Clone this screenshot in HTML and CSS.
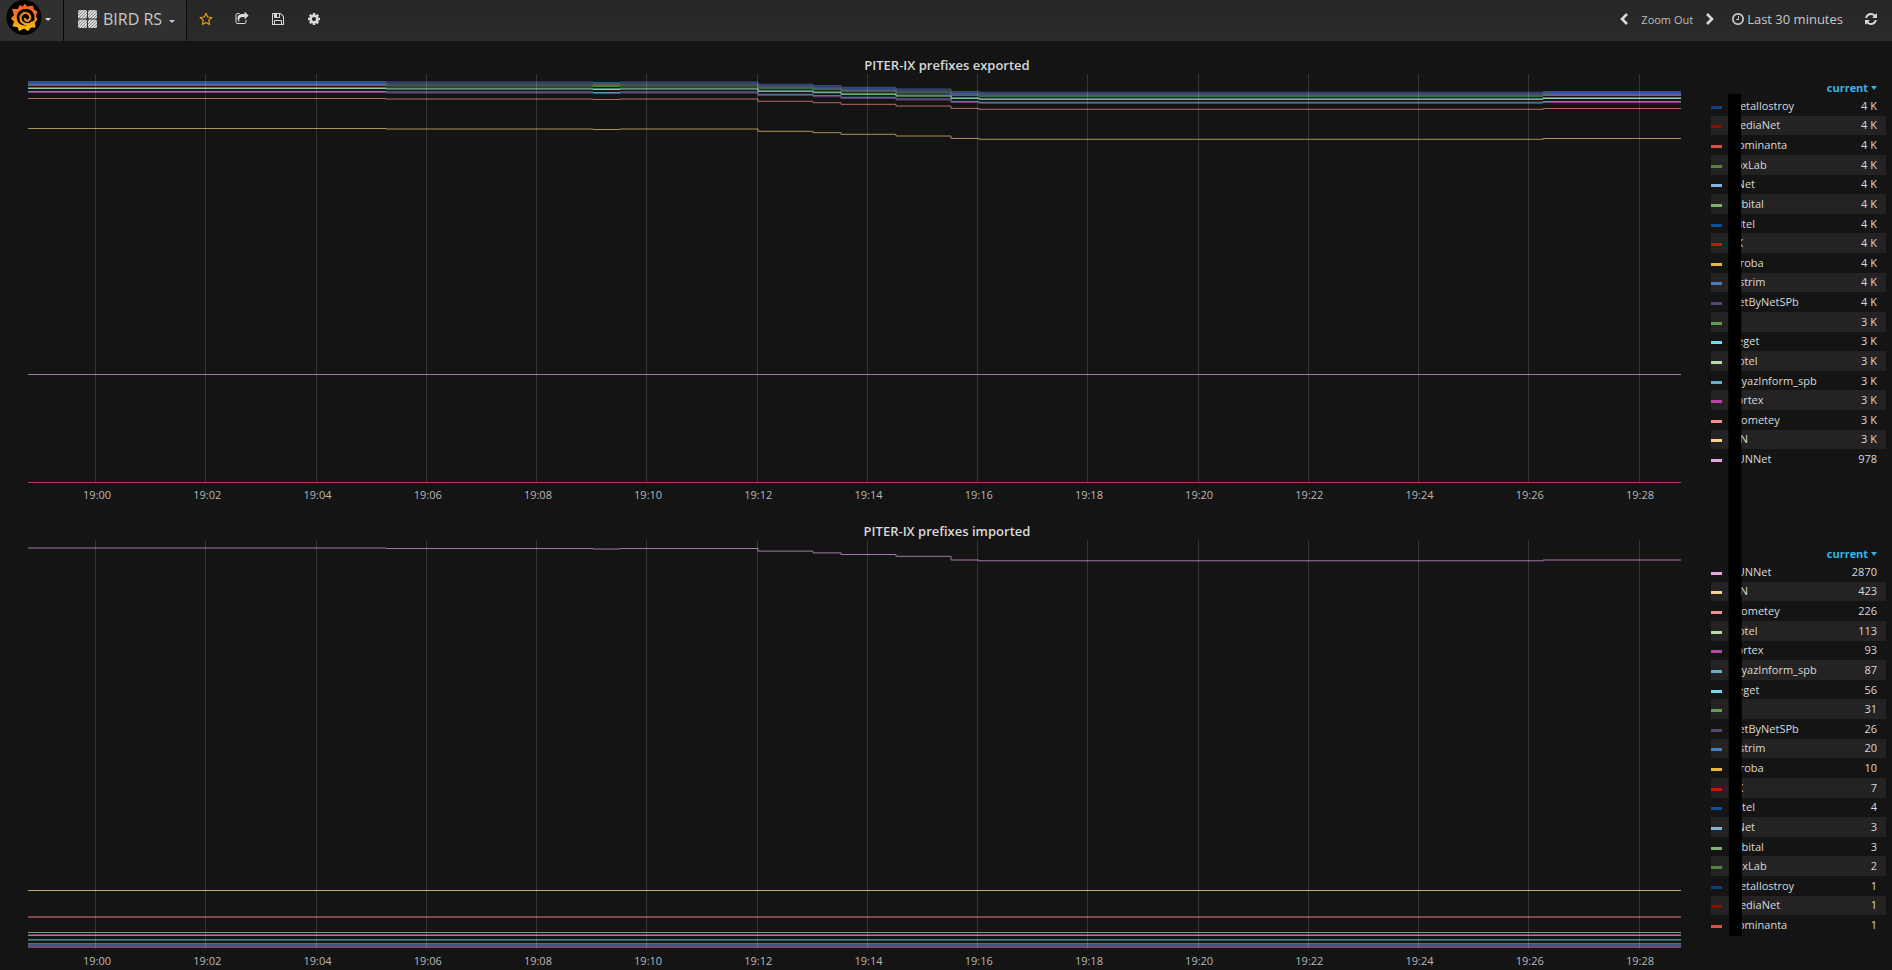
FILE: index.html
```html
<!DOCTYPE html>
<html lang="en">

<head>
    <meta charset="UTF-8">
    <meta name="viewport" content="width=device-width, initial-scale=1.0">
    <title>Grafana - BIRD RS</title>
    <link rel="stylesheet" href="styles.css">
</head>

<body>
    <nav class="navbar">
        <a href="#" class="brand" aria-label="Grafana menu">
            <svg class="logo" viewBox="0 0 36 36">
                <defs>
                    <linearGradient id="flame" x1="0" y1="0" x2="0" y2="1">
                        <stop offset="0" stop-color="#f05a28" />
                        <stop offset="0.45" stop-color="#f47b20" />
                        <stop offset="1" stop-color="#fdc911" />
                    </linearGradient>
                    <linearGradient id="curl" gradientUnits="userSpaceOnUse" x1="0" y1="4" x2="0" y2="31">
                        <stop offset="0" stop-color="#f05a28" />
                        <stop offset="0.5" stop-color="#f68a1f" />
                        <stop offset="1" stop-color="#fdc911" />
                    </linearGradient>
                </defs>
                <circle cx="18" cy="17.5" r="17.5" fill="#000" />
                <path fill="url(#flame)" d="M18.500 3.500L21.500 6.500L27 5.500L28 9.500L31.500 11.500L29.800 16L31.500 19.500L29 22.500L29.500 27.500L25 27.500L22 31L18 28.500L13 31L11.500 27L6.500 26.500L8 21.500L5 18.500L8 15L6 9L11.500 9L14 5L17 6.500Z" />
                <path fill="#000" d="M28.500 18C28.500 10.500 23 8.500 19 9C13.500 9.500 10.500 13.500 10.800 18C11 22.500 14.500 25.500 18.500 25.500C21 25.500 23.500 24.500 25 22.500L28.500 20Z" />
                <path fill="none" stroke="url(#curl)" stroke-width="2.200" stroke-linecap="round" d="M26 22.500C22 26 15 24 14.500 18.500C14.200 14.500 17.500 12.500 20.500 13C24 13.500 25.300 17.500 23.300 19.800C21.800 21.500 19 20.800 18.900 18.800" />
            </svg>
            <span class="caret"></span>
        </a>
        <a href="#" class="dash-picker">
            <svg class="grid-icon" viewBox="0 0 19 18">
                <defs>
                    <pattern id="hatch" width="3" height="3" patternUnits="userSpaceOnUse">
                        <rect width="3" height="3" fill="#d8d8d8" />
                        <path d="M-1 1L1 -1M0 3L3 0M2 4L4 2" stroke="#858585" stroke-width="0.900" />
                    </pattern>
                </defs>
                <g fill="url(#hatch)">
                    <rect width="9" height="8.500" rx="1.500" />
                    <rect x="10" width="9" height="8.500" rx="1.500" />
                    <rect y="9.500" width="9" height="8.500" rx="1.500" />
                    <rect x="10" y="9.500" width="9" height="8.500" rx="1.500" />
                </g>
            </svg>
            <span>BIRD RS</span>
            <span class="caret low"></span>
        </a>
        <div class="actions">
            <button class="star" aria-label="Mark as favorite">
                <svg viewBox="0 0 14 14"><path fill="none" stroke="currentColor" stroke-width="1.200" stroke-linejoin="round" d="M7 1.300L8.700 5L12.800 5.500L9.800 8.300L10.600 12.500L7 10.500L3.400 12.500L4.200 8.300L1.200 5.500L5.300 5Z" /></svg>
            </button>
            <button aria-label="Share dashboard">
                <svg viewBox="0 0 1792 1792"><path d="M1472 989v259q0 119-84.500 203.500t-203.500 84.500h-832q-119 0-203.500-84.500t-84.500-203.500v-832q0-119 84.500-203.500t203.500-84.500h255q13 0 22.500 9.500t9.500 22.500q0 27-26 32-77 26-133 60-10 4-16 4h-112q-66 0-113 47t-47 113v832q0 66 47 113t113 47h832q66 0 113-47t47-113v-214q0-19 18-29 28-13 54-37 16-16 35-8 21 9 21 31zm237-496l-384 384q-18 19-45 19-12 0-25-5-39-17-39-59v-192h-160q-323 0-438 131-119 137-74 473 3 23-20 34-8 2-12 2-16 0-26-13-10-14-21-31t-39.500-68.500-49.500-99.500-38.500-114-17.500-122q0-49 3.500-91t14-90 28-88 47-81.500 68.500-74 94.500-61.500 124.500-48.500 159.500-30.500 196.500-11h160v-192q0-42 39-59 13-5 25-5 26 0 45 19l384 384q19 19 19 45t-19 45z" /></svg>
            </button>
            <button aria-label="Save dashboard">
                <svg viewBox="0 0 1792 1792"><path d="M512 1536h768v-384h-768v384zm896 0h128v-896q0-14-10-38.500t-20-34.500l-281-281q-10-10-34-20t-39-10v416q0 40-28 68t-68 28h-576q-40 0-68-28t-28-68v-416h-128v1280h128v-416q0-40 28-68t68-28h832q40 0 68 28t28 68v416zm-384-928v-320q0-13-9.500-22.500t-22.500-9.500h-192q-13 0-22.500 9.500t-9.500 22.500v320q0 13 9.500 22.500t22.500 9.500h192q13 0 22.500-9.500t9.500-22.500zm640 32v928q0 40-28 68t-68 28h-1344q-40 0-68-28t-28-68v-1344q0-40 28-68t68-28h928q40 0 88 20t76 48l280 280q28 28 48 76t20 88z" /></svg>
            </button>
            <button aria-label="Settings">
                <svg viewBox="0 0 1792 1792"><path d="M1152 896q0-106-75-181t-181-75-181 75-75 181 75 181 181 75 181-75 75-181zm512-109v222q0 12-8 23t-20 13l-185 28q-19 54-39 91 35 50 107 138 10 12 10 25t-9 23q-27 37-99 108t-94 71q-12 0-26-9l-138-108q-44 23-91 38-16 136-29 186-7 28-36 28h-222q-14 0-24.500-8.500t-11.500-21.500l-28-184q-49-16-90-37l-141 107q-10 9-25 9-14 0-25-11-126-114-165-168-7-10-7-23 0-12 8-23 15-21 51-66.500t54-70.500q-27-50-41-99l-183-27q-13-2-21-12.500t-8-23.500v-222q0-12 8-23t19-13l186-28q14-46 39-92-40-57-107-138-10-12-10-24 0-10 9-23 26-36 98.500-107.500t94.500-71.500q13 0 26 10l138 107q44-23 91-38 16-136 29-186 7-28 36-28h222q14 0 24.500 8.500t11.500 21.500l28 184q49 16 90 37l142-107q9-9 24-9 13 0 25 10 129 119 165 170 7 8 7 22 0 12-8 23-15 21-51 66.500t-54 70.500q26 50 41 98l183 28q13 2 21 12.500t8 23.500z" /></svg>
            </button>
        </div>
        <div class="time-nav">
            <button aria-label="Back in time">
                <svg class="chevron" viewBox="0 0 8 12"><path fill="none" stroke="currentColor" stroke-width="2.600" d="M7 1L2 6L7 11" /></svg>
            </button>
            <button class="zoom-out">Zoom Out</button>
            <button aria-label="Forward in time">
                <svg class="chevron" viewBox="0 0 8 12"><path fill="none" stroke="currentColor" stroke-width="2.600" d="M1 1L6 6L1 11" /></svg>
            </button>
            <button class="range">
                <svg viewBox="0 0 1792 1792"><path d="M1024 544v448q0 14-9 23t-23 9h-320q-14 0-23-9t-9-23v-64q0-14 9-23t23-9h224v-352q0-14 9-23t23-9h64q14 0 23 9t9 23zm416 352q0-148-73-273t-198-198-273-73-273 73-198 198-73 273 73 273 198 198 273 73 273-73 198-198 73-273zm224 0q0 209-103 385.500t-279.500 279.500-385.500 103-385.500-103-279.500-279.500-103-385.500 103-385.500 279.500-279.500 385.500-103 385.500 103 279.500 279.500 103 385.500z" /></svg>
                Last 30 minutes
            </button>
            <button aria-label="Refresh">
                <svg viewBox="0 0 1792 1792"><path d="M1639 1056q0 5-1 7-64 268-268 434.500t-478 166.500q-146 0-282.500-55t-243.500-157l-129 129q-19 19-45 19t-45-19-19-45v-448q0-26 19-45t45-19h448q26 0 45 19t19 45-19 45l-137 137q71 66 161 102t187 36q134 0 250-65t186-179q11-17 53-117 8-23 30-23h192q13 0 22.500 9.500t9.500 22.500zm25-800v448q0 26-19 45t-45 19h-448q-26 0-45-19t-19-45 19-45l138-138q-148-137-349-137-134 0-250 65t-186 179q-11 17-53 117-8 23-30 23h-199q-13 0-22.500-9.500t-9.500-22.500v-7q65-268 270-434.500t480-166.500q146 0 284 55.500t245 156.500l130-129q19-19 45-19t45 19 19 45z" /></svg>
            </button>
        </div>
    </nav>

    <main class="dashboard">
        <section class="panel" id="exported">
            <h2>PITER-IX prefixes exported</h2>
            <div class="panel-body">
                <div class="graph">
                    <svg class="plot" viewBox="0 0 1653 409" preserveAspectRatio="none"></svg>
                    <div class="ticks"></div>
                </div>
                <table class="legend">
                    <thead>
                        <tr><th colspan="3"><button>current <span class="caret"></span></button></th></tr>
                    </thead>
                    <tbody></tbody>
                </table>
            </div>
        </section>

        <section class="panel" id="imported">
            <h2>PITER-IX prefixes imported</h2>
            <div class="panel-body">
                <div class="graph">
                    <svg class="plot" viewBox="0 0 1653 409" preserveAspectRatio="none"></svg>
                    <div class="ticks"></div>
                </div>
                <table class="legend">
                    <thead>
                        <tr><th colspan="3"><button>current <span class="caret"></span></button></th></tr>
                    </thead>
                    <tbody></tbody>
                </table>
            </div>
        </section>
        <div class="mask"></div>
    </main>

    <script src="main.js"></script>
</body>

</html>
```
FILE: styles.css
```css
* {
    margin: 0;
    box-sizing: border-box;
}

body {
    background-color: #141414;
    color: #d8d9da;
    font-family: "Open Sans", "Noto Sans", sans-serif;
    font-size: 11px;
}

button {
    padding: 0;
    border: none;
    background: none;
    color: inherit;
    font: inherit;
    cursor: pointer;
}

a {
    color: inherit;
    text-decoration: none;
}

svg {
    display: block;
    fill: currentColor;
}

/* navbar */
.navbar {
    height: 41px;
    display: flex;
    background: linear-gradient(#262626, #2b2b2b);
}

.brand {
    width: 64px;
    padding-left: 6px;
    display: flex;
    background-color: #303030;
    border-right: 1px solid #0a0a0a;
}

.logo {
    width: 36px;
    height: 36px;
}

.caret {
    display: inline-block;
    border-top: 3px solid currentColor;
    border-left: 3px solid transparent;
    border-right: 3px solid transparent;
}

.brand .caret {
    margin: 18px 0 0 3px;
}

.dash-picker {
    padding: 0 6px 3px 14px;
    display: flex;
    align-items: center;
    font-size: 16px;
    color: #c8c8c8;
    background-color: #303030;
    border-right: 1px solid #0a0a0a;
}

.grid-icon {
    width: 19px;
    height: 18px;
    margin-right: 6px;
}

.caret.low {
    margin: 5px 5px 0 7px;
}

.actions {
    padding: 0 0 3px 12px;
    display: flex;
    align-items: center;
    gap: 22px;
}

.actions svg,
.time-nav svg {
    width: 14px;
    height: 14px;
}

.star {
    color: #eb9b13;
}

.time-nav {
    margin-left: auto;
    padding: 0 14px 3px 0;
    display: flex;
    align-items: center;
    gap: 13px;
}

.time-nav .chevron {
    width: 8px;
    height: 12px;
}

.zoom-out {
    font-size: 11px;
    color: #bcbcbc;
}

.range {
    margin: 0 8px 0 4px;
    display: flex;
    align-items: center;
    gap: 2px;
    font-size: 13px;
    color: #c8c8c8;
}

/* panels */
.dashboard {
    position: relative;
    padding: 15px 6px 0 28px;
    display: flex;
    flex-direction: column;
    gap: 19px;
}

.panel h2 {
    padding-right: 20px;
    font-size: 13px;
    line-height: 18px;
    font-weight: 600;
    text-align: center;
}

.panel-body {
    display: flex;
    gap: 30px;
    align-items: flex-start;
}

.graph {
    flex: 1;
    min-width: 0;
}

.plot {
    width: 100%;
    height: 409px;
    fill: none;
}

.plot path {
    vector-effect: non-scaling-stroke;
}

.grid-line {
    stroke: rgba(255, 255, 255, 0.14);
}

.ticks {
    margin: 0 -14px 0 14px;
    padding-top: 4px;
    display: flex;
    line-height: 16px;
    color: #b8b8b8;
}

.ticks span {
    flex: 1;
    text-align: center;
}

.legend {
    width: 175px;
    height: 390px;
    margin-top: 5px;
    border-collapse: collapse;
    line-height: 14px;
}

.legend th {
    height: 17px;
    padding: 0 9px 0 0;
    text-align: right;
    color: #33b5e5;
}

.legend th .caret {
    vertical-align: 2px;
    border-top-width: 4px;
}

.legend td {
    padding: 0;
    white-space: nowrap;
}

.legend .swatch {
    width: 19px;
}

.swatch i {
    display: block;
    width: 11px;
    height: 3px;
    margin-top: 3px;
}

.legend .value {
    padding-right: 9px;
    text-align: right;
}

.legend tbody tr:nth-child(even) {
    background-color: #242223;
}

/* strip laid over the start of the names */
.mask {
    position: absolute;
    top: 53px;
    bottom: 33px;
    right: 150px;
    width: 14px;
    background-color: #000;
    clip-path: polygon(0 0, 13px 0, 14px 100%, 1px 100%);
}
```
FILE: main.js
```js
// [name, colour, exported, imported]
const peers = [
    ['Metallostroy', '#0a437c', '4 K', 1],
    ['MediaNet', '#890f02', '4 K', 1],
    ['Dominanta', '#e24d42', '4 K', 1],
    ['FoxLab', '#508642', '4 K', 2],
    ['PNet', '#82b5d8', '4 K', 3],
    ['Arbital', '#7eb26d', '4 K', 3],
    ['Viltel', '#0a50a1', '4 K', 4],
    ['VK', '#bf1b00', '4 K', 7],
    ['Airoba', '#eab839', '4 K', 10],
    ['Elstrim', '#447ebc', '4 K', 20],
    ['NetByNetSPb', '#584477', '4 K', 26],
    ['IX', '#629e51', '3 K', 31],
    ['Beget', '#70dbed', '3 K', 56],
    ['Dotel', '#b7dbab', '3 K', 113],
    ['SvyazInform_spb', '#64b0c8', '3 K', 87],
    ['Vortex', '#ba43a9', '3 K', 93],
    ['Prometey', '#f29191', '3 K', 226],
    ['PIN', '#f9d48f', '3 K', 423],
    ['RUNNet', '#e5a8e2', '978', 2870]
]

// x of every step and how far the lines have moved down by then
const steps = [[358, 0.5], [565, 1], [592, 0.5], [730, 2.8], [785, 4.2], [813, 5.8], [868, 7.5], [923, 9.9], [951, 10.8], [1515, 10]]
const topSteps = [[358, 0.5], [565, 1], [592, 0.5], [730, 3.1], [785, 4.9], [813, 6.5], [868, 8.3], [923, 12], [951, 12.8], [1515, 12]]

// [y, colour, steps]
const exportedLines = [
    [7.5, '#3c5488', steps],
    [8.5, '#1f4f9c', steps],
    [9.5, '#6b5552', steps],
    [10.5, '#50638c', steps],
    [11.5, '#4e7b48', steps],
    [13.5, '#3f7d80', steps],
    [14.5, '#94cda6', steps],
    [17.5, '#5795b4', steps],
    [18.5, '#7b3d85', steps],
    [24.5, '#b56868', steps],
    [54.5, '#a8905f', steps],
    [300.5, '#a578a3', []],
    [408.5, '#a83a72', []]
]

const importedLines = [
    [8, '#a578a3', topSteps],
    [350.5, '#c8a66d', []],
    [376.5, '#81494b', []],
    [377.5, '#81494b', []],
    [392.5, '#7d9a76', []],
    [394.5, '#85357b', []],
    [395.5, '#6a93a8', []],
    [399.5, '#3f7f86', []],
    [400.5, '#34625f', []],
    [403.5, '#4e7b48', []],
    [404.5, '#3b5a92', []],
    [405.5, '#4a5573', []],
    [406.5, '#6a5358', []],
    [407.5, '#93397f', []]
]

const drawPlot = (panel, lines) => {
    let html = ''
    lines.forEach(([y, color, moves]) => {
        let d = `M0 ${y}`
        moves.forEach(([x, dy]) => {
            d += `H${x}V${y + dy}`
        })
        html += `<path d="${d}H1653" stroke="${color}"/>`
    })

    let ticks = ''
    for (let i = 0; i < 15; i++) {
        const x = Math.floor(67.5 + i * 110.25) + 0.5
        html += `<path class="grid-line" d="M${x} 0V409"/>`
        ticks += `<span>19:${String(i * 2).padStart(2, '0')}</span>`
    }
    panel.querySelector('.plot').innerHTML = html
    panel.querySelector('.ticks').innerHTML = ticks
}

const drawLegend = (panel, rows, col) => {
    panel.querySelector('tbody').innerHTML = rows.map(row => `
        <tr>
            <td class="swatch"><i style="background:${row[1]}"></i></td>
            <td>${row[0]}</td>
            <td class="value">${row[col]}</td>
        </tr>`).join('')
}

const exported = document.getElementById('exported')
const imported = document.getElementById('imported')

drawPlot(exported, exportedLines)
drawPlot(imported, importedLines)
drawLegend(exported, peers, 2)

// same value keeps the order of the first list
const byImported = [...peers].sort((a, b) => b[3] - a[3])
drawLegend(imported, byImported, 3)
```
